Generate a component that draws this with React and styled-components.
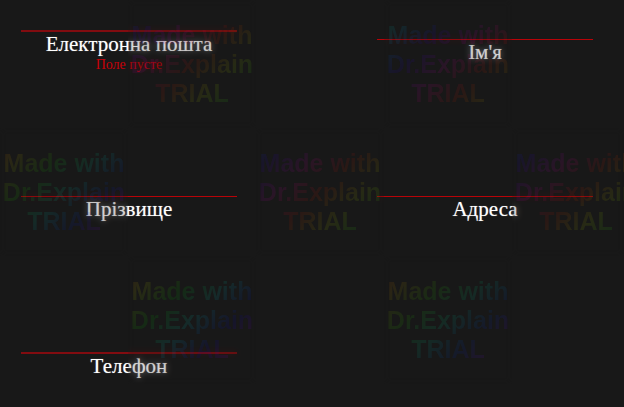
import React from "react";
import styled, { createGlobalStyle } from "styled-components";

const GlobalStyle = createGlobalStyle`
  * { box-sizing: border-box; }
  body {
    margin: 0;
    background: #181818;
    font-family: "Liberation Serif", "Times New Roman", serif;
  }
`;

const Page = styled.main`
  position: relative;
  min-height: 100vh;
  overflow: hidden;
  background: #181818;
`;

const Form = styled.form`
  display: grid;
  grid-template-columns: 1fr 1fr;
  grid-auto-rows: minmax(69px, auto);
  align-items: center;
  gap: 88px 140px;
  padding: 5px 31px 0 21px;
`;

const Field = styled.div`
  display: flex;
  flex-direction: column;
  text-align: center;
`;

const Input = styled.input`
  width: 100%;
  height: 26px;
  padding: 0 4px;
  border: 0;
  border-bottom: ${(p) => (p.$thick ? "2px solid #820c10" : "1px solid #b80308")};
  outline: 0;
  background: transparent;
  color: #fff;
  font: 20px/24px "Liberation Serif", "Times New Roman", serif;
`;

const Label = styled.label`
  color: #fff;
  font-size: 21px;
  line-height: 25px;
  text-shadow: 0 0 1px rgba(255, 255, 255, 0.5);
`;

const ErrorText = styled.span`
  color: #c80008;
  font-size: 14px;
  line-height: 16px;
`;

const MarkLayer = styled.div`
  position: absolute;
  inset: 0;
  display: grid;
  grid-template-columns: repeat(5, 128px);
  grid-template-rows: repeat(3, 128px);
  overflow: hidden;
  pointer-events: none;
`;

const MarkTile = styled.div`
  display: grid;
  grid-area: ${(p) => p.$row} / ${(p) => p.$col};
`;

const MarkHaze = styled.div`
  grid-area: 1 / 1;
  opacity: 0.32;
  backdrop-filter: blur(3px);
`;

const rainbow = (hue) =>
  [0, 60, 120, 180, 240, 300, 360].map((step) => `hsl(${hue + step}, 100%, 40%)`).join(", ");

const MarkText = styled.p`
  grid-area: 1 / 1;
  margin: 0;
  padding-top: 21px;
  opacity: 0.1;
  background: linear-gradient(135deg, ${(p) => rainbow(p.$hue)});
  background-clip: text;
  -webkit-background-clip: text;
  color: transparent;
  font: bold 25px/29px "Liberation Sans", Arial, sans-serif;
  text-align: center;
  white-space: nowrap;
`;

const fields = [
  { id: "email", label: "Електронна пошта", type: "email", error: "Поле пусте", thick: true },
  { id: "name", label: "Ім'я", type: "text" },
  { id: "surname", label: "Прізвище", type: "text" },
  { id: "address", label: "Адреса", type: "text" },
  { id: "phone", label: "Телефон", type: "tel", thick: true },
];

const marks = [
  { row: 1, col: 2, hue: 190 },
  { row: 1, col: 4, hue: 130 },
  { row: 2, col: 1, hue: -10 },
  { row: 2, col: 3, hue: 190 },
  { row: 2, col: 5, hue: 190 },
  { row: 3, col: 2, hue: 0 },
  { row: 3, col: 4, hue: -15 },
];

export default function App() {
  return (
    <Page>
      <GlobalStyle />
      <Form noValidate>
        {fields.map((f) => (
          <Field key={f.id}>
            <Input
              id={f.id}
              type={f.type}
              $thick={f.thick}
              aria-invalid={f.error ? true : undefined}
              aria-describedby={f.error ? `${f.id}-error` : undefined}
            />
            <Label htmlFor={f.id}>{f.label}</Label>
            {f.error && <ErrorText id={`${f.id}-error`}>{f.error}</ErrorText>}
          </Field>
        ))}
      </Form>
      <MarkLayer>
        {marks.map((m) => (
          <MarkTile key={`${m.row}-${m.col}`} $row={m.row} $col={m.col}>
            <MarkHaze />
            <MarkText $hue={m.hue}>
              Made with
              <br />
              Dr.Explain
              <br />
              TRIAL
            </MarkText>
          </MarkTile>
        ))}
      </MarkLayer>
    </Page>
  );
}
